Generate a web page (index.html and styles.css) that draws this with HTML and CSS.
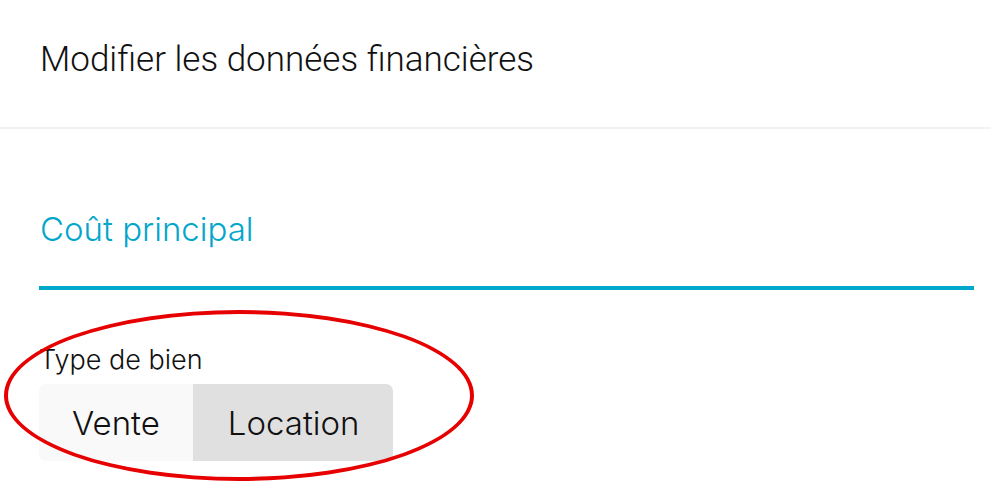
FILE: index.html
```html
<!DOCTYPE html>
<html lang="fr">
<head>
    <meta charset="UTF-8">
    <meta name="viewport" content="width=device-width, initial-scale=1.0">
    <title>Modifier les données financières</title>
    <link rel="stylesheet" href="styles.css">
</head>
<body>

<div class="page-header">
    <h1>Modifier les données financières</h1>
</div>

<div class="form-body">
    <h2 class="section-title">Coût principal</h2>

    <div class="field">
        <label class="field-label">Type de bien</label>
        <div class="segmented">
            <button class="segment">Vente</button>
            <button class="segment active">Location</button>
        </div>
        <div class="annotation"></div>
    </div>
</div>

</body>
</html>
```

FILE: styles.css
```css
body {
    margin: 0;
    font-family: Inter, Roboto, "Noto Sans", sans-serif;
    background: #fff;
    color: #111;
}

.page-header {
    box-sizing: border-box;
    height: 129px;
    padding: 39px 40px 0;
    border-bottom: 2px solid #f2f2f2;
}

.page-header h1 {
    margin: 0;
    font-family: Roboto, sans-serif;
    font-weight: 300;
    font-size: 35px;
    line-height: 41px;
    color: #111;
}

.form-body {
    padding: 80px 17px 60px 39px;
}

.section-title {
    margin: 0;
    padding: 0 0 37px 1px;
    font-weight: 300;
    font-size: 33px;
    color: #03a6cb;
    border-bottom: 4px solid #00a8cc;
}

.field {
    position: relative;
    padding-top: 53px;
}

.field-label {
    display: block;
    font-weight: 300;
    font-size: 27px;
    margin-bottom: 8px;
}

.segmented {
    display: inline-flex;
    border-radius: 7px;
    overflow: hidden;
}

.segment {
    border: none;
    margin: 0;
    height: 77px;
    padding: 0 33px;
    font-family: inherit;
    font-weight: 300;
    font-size: 33px;
    color: #111;
    background: #f9f9f9;
}

.segment.active {
    padding: 0 34px 0 35px;
    background: #e0e0e0;
}

.annotation {
    position: absolute;
    left: -35px;
    top: 20px;
    width: 462px;
    height: 163px;
    border: 4px solid #e60000;
    border-radius: 50%;
    pointer-events: none;
}
```
